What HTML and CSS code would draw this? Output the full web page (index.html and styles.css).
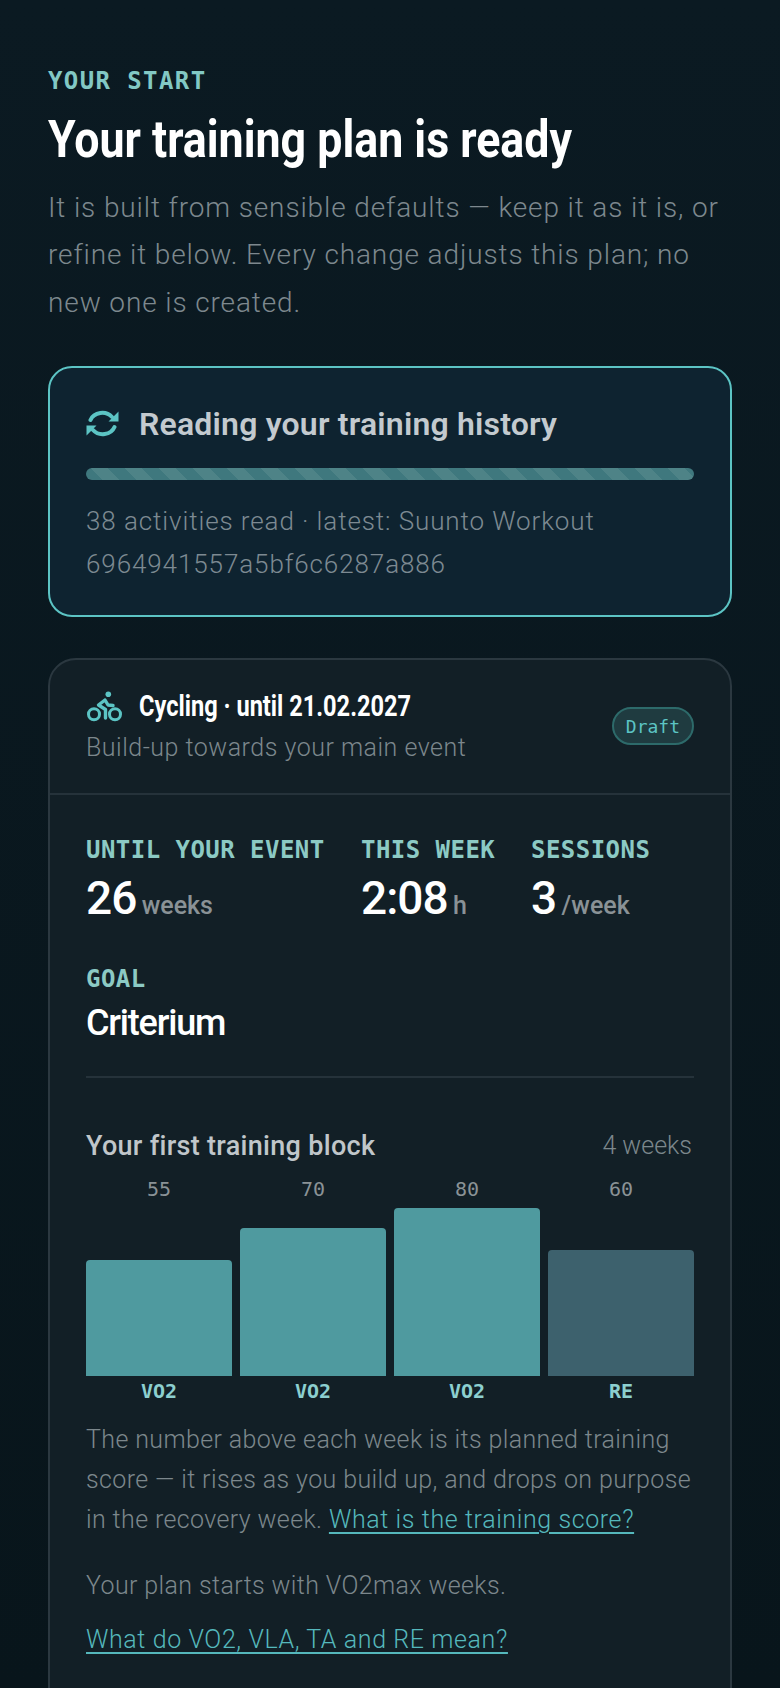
FILE: index.html
```html
<!DOCTYPE html>
<html lang="en">
<head>
    <meta charset="UTF-8">
    <meta name="viewport" content="width=device-width, initial-scale=1.0">
    <title>Your training plan</title>
    <link rel="stylesheet" href="styles.css">
</head>
<body>
    <main class="page">
        <div class="eyebrow">YOUR START</div>
        <h1 class="headline">Your training plan is ready</h1>
        <p class="intro">It is built from sensible defaults — keep it as it is, or refine it below. Every change adjusts this plan; no new one is created.</p>

        <section class="sync">
            <div class="sync-head">
                <svg class="sync-icon" viewBox="0 0 33 27">
                    <path class="arc" d="M4.5 10A12.5 11 0 0 1 26 7"/>
                    <path class="arc" d="M28.5 17A12.5 11 0 0 1 7 20"/>
                    <path class="head" d="M32.5 1.5V11.5H22.5ZM.5 25.5V15.5H10.5Z"/>
                </svg>
                <span class="sync-title">Reading your training history</span>
            </div>
            <div class="progress"></div>
            <p class="sync-text">38 activities read · latest: Suunto Workout 6964941557a5bf6c6287a886</p>
        </section>

        <section class="plan">
            <header class="plan-head">
                <div class="plan-info">
                    <div class="plan-line">
                        <svg class="bike-icon" viewBox="6 4 37 32">
                            <circle class="solid" cx="28.3" cy="8.3" r="2.8"/>
                            <circle cx="14" cy="28.3" r="5.5"/>
                            <circle cx="35" cy="28.3" r="5.5"/>
                            <path class="frame" d="M33 19.5 28 19 25 14 18.5 19 25.5 23.5V32"/>
                        </svg>
                        <span class="plan-title">Cycling · until 21.02.2027</span>
                    </div>
                    <div class="plan-sub">Build-up towards your main event</div>
                </div>
                <span class="badge">Draft</span>
            </header>
            <div class="plan-body">
                <div class="stats">
                    <div class="stat">
                        <div class="label">UNTIL YOUR EVENT</div>
                        <div class="value">26 <small>weeks</small></div>
                    </div>
                    <div class="stat">
                        <div class="label">THIS WEEK</div>
                        <div class="value">2:08 <small>h</small></div>
                    </div>
                    <div class="stat">
                        <div class="label">SESSIONS</div>
                        <div class="value">3 <small>/week</small></div>
                    </div>
                </div>
                <div class="goal">
                    <div class="label">GOAL</div>
                    <div class="goal-name">Criterium</div>
                </div>
                <div class="block-head">
                    <span class="block-title">Your first training block</span>
                    <span class="block-len">4 weeks</span>
                </div>
                <div class="chart">
                    <div class="week"><span class="score">55</span><div class="bar" style="height:116px"></div><span class="kind">VO2</span></div>
                    <div class="week"><span class="score">70</span><div class="bar" style="height:148px"></div><span class="kind">VO2</span></div>
                    <div class="week"><span class="score">80</span><div class="bar" style="height:168px"></div><span class="kind">VO2</span></div>
                    <div class="week"><span class="score">60</span><div class="bar rest" style="height:126px"></div><span class="kind">RE</span></div>
                </div>
                <p class="note first">The number above each week is its planned training score — it rises as you build up, and drops on purpose in the recovery week. <a href="#">What is the training score?</a></p>
                <p class="note start">Your plan starts with VO2max weeks.</p>
                <p class="note more"><a href="#">What do VO2, VLA, TA and RE mean?</a></p>
            </div>
        </section>
    </main>
</body>
</html>
```

FILE: styles.css
```css
html, body {
    margin: 0;
    height: 100vh;
    overflow: hidden;
}

body {
    background: linear-gradient(#0b1a22, #08151b);
    color: #fff;
    font-family: Roboto, sans-serif;
}

.page {
    padding: 64px 48px 0;
}

.eyebrow {
    font-family: "DejaVu Sans Mono", monospace;
    font-size: 24px;
    font-weight: 700;
    line-height: 34px;
    letter-spacing: 1.4px;
    color: #82c8c4;
}

.headline {
    display: inline-block;
    margin: 11px 0 0;
    font-size: 52px;
    font-weight: 700;
    line-height: 62px;
    white-space: nowrap;
    transform: scaleX(0.86);
    transform-origin: left;
}

.intro {
    margin: 13px 0 0;
    font-size: 28px;
    font-weight: 300;
    line-height: 47.3px;
    letter-spacing: 0.88px;
    color: #7d888e;
}

.sync {
    margin-top: 39.9px;
    padding: 36px;
    height: 251px;
    box-sizing: border-box;
    background-color: #0e2330;
    border: 2px solid #5cc4c4;
    border-radius: 24px;
}

.sync-head {
    display: flex;
    align-items: center;
    gap: 20px;
}

.sync-icon {
    width: 33px;
    height: 27px;
}

.sync-icon .arc {
    fill: none;
    stroke: #5cc4c4;
    stroke-width: 4;
    stroke-linecap: round;
}

.sync-icon .head {
    fill: #5cc4c4;
}

.sync-title {
    font-size: 32px;
    font-weight: 600;
    line-height: 40px;
    letter-spacing: 0.2px;
    color: #c3cacf;
}

.progress {
    margin-top: 24px;
    height: 12px;
    border-radius: 6px;
    background: repeating-linear-gradient(45deg, #3f787e 0 12px, #4e8387 12px 24px);
}

.sync-text {
    margin: 20px 0 0;
    font-size: 26px;
    font-weight: 300;
    line-height: 43.5px;
    letter-spacing: 0.9px;
    color: #7d8a92;
}

.plan {
    margin-top: 41px;
    height: 1100px;
    background-color: #121f26;
    border: 2px solid #2b3840;
    border-radius: 28px;
}

.plan-head {
    display: flex;
    justify-content: space-between;
    align-items: center;
    padding: 0 36px;
    height: 135px;
    box-sizing: border-box;
    border-bottom: 2px solid #25323a;
}

.plan-info {
    padding-bottom: 2px;
}

.plan-line {
    display: flex;
    align-items: center;
    gap: 16px;
}

.bike-icon {
    width: 37px;
    height: 32px;
    fill: none;
    stroke: #5cc4c4;
    stroke-width: 3;
}

.bike-icon .solid {
    fill: #5cc4c4;
    stroke: none;
}

.bike-icon .frame {
    stroke-width: 3.4;
    stroke-linejoin: round;
    stroke-linecap: round;
}

.plan-title {
    font-size: 30px;
    font-weight: 700;
    white-space: nowrap;
    transform: scaleX(0.786);
    transform-origin: left;
}

.plan-sub {
    margin-top: 10px;
    font-size: 25px;
    font-weight: 300;
    letter-spacing: 0.5px;
    color: #7c878c;
}

.badge {
    padding: 0 12px;
    height: 38px;
    box-sizing: border-box;
    display: flex;
    align-items: center;
    font-family: "DejaVu Sans Mono", monospace;
    font-size: 18px;
    color: #5cc4c4;
    background-color: #1f3b40;
    border: 2px solid #2d6a6a;
    border-radius: 19px;
}

.plan-body {
    padding: 38px 36px 0;
}

.stats {
    display: flex;
}

.stat:nth-child(1) {
    width: 275px;
}

.stat:nth-child(2) {
    width: 170px;
}

.label {
    font-family: "DejaVu Sans Mono", monospace;
    font-size: 24px;
    font-weight: 700;
    line-height: 34px;
    letter-spacing: 0.47px;
    color: #8ccac4;
}

.value {
    margin-top: 3px;
    font-size: 46px;
    font-weight: 500;
    line-height: 56px;
    letter-spacing: -1px;
    word-spacing: -5px;
}

.value small {
    font-size: 25px;
    font-weight: 500;
    letter-spacing: 0;
    color: #8a9296;
}

.goal {
    margin-top: 28px;
    padding-bottom: 28px;
    border-bottom: 2px solid #25323a;
}

.goal-name {
    margin-top: 2px;
    font-size: 36px;
    font-weight: 500;
    line-height: 50px;
    letter-spacing: -1.2px;
}

.block-head {
    display: flex;
    justify-content: space-between;
    align-items: center;
    height: 40px;
    margin-top: 48px;
    padding-right: 2px;
}

.block-title {
    font-size: 27px;
    font-weight: 500;
    letter-spacing: 0.3px;
    color: #c0c6ca;
}

.block-len {
    font-size: 25px;
    font-weight: 300;
    color: #7c878c;
}

.chart {
    display: grid;
    grid-template-columns: repeat(4, 1fr);
    gap: 8px;
    margin-top: 9px;
}

.week {
    display: flex;
    flex-direction: column;
    align-items: center;
    height: 231px;
}

.score {
    margin-bottom: auto;
    font-family: "DejaVu Sans Mono", monospace;
    font-size: 20px;
    line-height: 28px;
    color: #8a9296;
}

.bar {
    align-self: stretch;
    background-color: #4f9a9f;
    border-radius: 4px 4px 0 0;
}

.bar.rest {
    background-color: #3d616d;
}

.kind {
    font-family: "DejaVu Sans Mono", monospace;
    font-size: 20px;
    font-weight: 700;
    line-height: 30px;
    color: #8ccfcf;
}

.note {
    margin: 0;
    font-size: 25px;
    font-weight: 300;
    line-height: 40px;
    letter-spacing: 0.38px;
    color: #7c878c;
}

.note.first {
    margin-top: 14px;
}

.note.start {
    margin-top: 26px;
}

.note.more {
    margin-top: 14px;
}

.note a {
    color: #55b8bc;
    letter-spacing: 0.6px;
    text-decoration-thickness: 2px;
    text-underline-offset: 4px;
}
```
